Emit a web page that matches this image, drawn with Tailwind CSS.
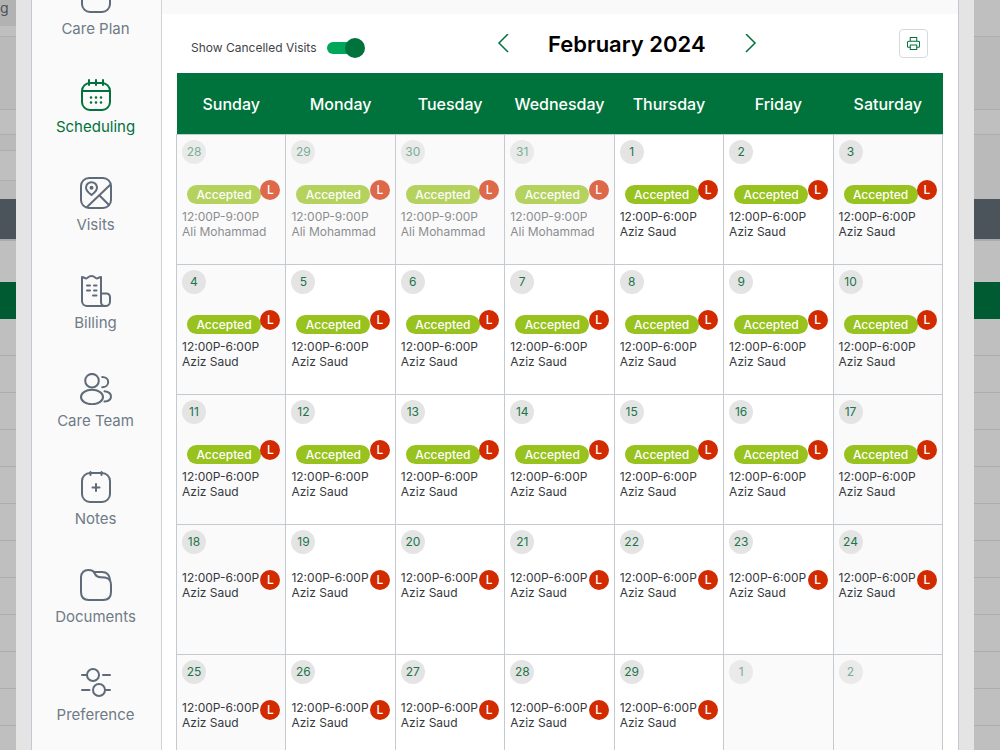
<!DOCTYPE html>
<html lang="en">
<head>
  <meta charset="UTF-8" />
  <meta name="viewport" content="width=device-width, initial-scale=1" />
  <title>Scheduling - February 2024</title>
  <script src="https://cdn.jsdelivr.net/npm/@tailwindcss/browser@4"></script>
</head>
<body class="relative flex h-screen overflow-hidden bg-[#bfbfbf] font-['Inter','Liberation_Sans',sans-serif]">

  <!-- Page behind the dialog -->
  <div class="absolute inset-0 flex flex-col overflow-hidden" aria-hidden="true">
    <div class="flex h-9 shrink-0">
      <div class="h-[26px] w-40 bg-[#b2b2b2] text-sm leading-4 text-[#4b535b]">g</div>
    </div>
    <div class="h-[74px] shrink-0 border-y border-[#adadad] bg-[#bababa]"></div>
    <div class="h-[25px] shrink-0 border-b border-[#adadad]"></div>
    <div class="flex h-16 shrink-0 justify-between bg-[#bababa]">
      <div class="flex w-1/2 flex-col">
        <div class="h-4 border-b border-[#adadad]"></div>
        <div class="h-[30px] border-b border-[#adadad] bg-[#bfbfbf]"></div>
      </div>
    </div>
    <div class="h-[42px] shrink-0 border-b-2 border-[#a9abad] bg-[#4b535b]"></div>
    <div class="h-[41px] shrink-0"></div>
    <div class="h-[37px] shrink-0 bg-[#005a32]"></div>
    <div id="backRows"></div>
  </div>

  <!-- Dialog -->
  <div class="relative mr-[26px] ml-4 flex min-w-0 flex-1 bg-[#e4e4e4] px-[15px]">
    <div class="flex min-w-0 flex-1 border-x border-[#c3c9d0] bg-white">

      <!-- Side navigation -->
      <nav class="w-[130px] shrink-0 overflow-hidden border-r border-[#cdd3da] bg-[#fafafa] pr-0.5">
        <ul class="-mt-[19px] flex flex-col gap-10 text-[15px] leading-5 text-[#6f7b87]">
          <li>
            <a href="#" class="flex flex-col items-center gap-[6px]">
              <svg class="size-8" viewBox="0 0 32 32" fill="none" stroke="#5f6b78" stroke-width="2" stroke-linecap="round"><rect x="2" y="2" width="28" height="29" rx="8" /></svg>
              Care Plan
            </a>
          </li>
          <li>
            <a href="#" aria-current="page" class="flex flex-col items-center gap-[6px] text-[#00723b]">
              <svg class="size-8" viewBox="0 0 32 32" fill="none" stroke="currentColor" stroke-width="2" stroke-linecap="round">
                <rect x="2" y="4" width="28" height="27" rx="8" />
                <path d="M2 12h28M9 1v5M16 1v5M23 1v5" />
                <path d="M11 18.500h.01M16 18.500h.01M21 18.500h.01M11 23.500h.01M16 23.500h.01M21 23.500h.01" stroke-width="2.600" />
              </svg>
              Scheduling
            </a>
          </li>
          <li>
            <a href="#" class="flex flex-col items-center gap-[6px]">
              <svg class="size-8" viewBox="0 0 32 32" fill="none" stroke="#5f6b78" stroke-width="2" stroke-linecap="round" stroke-linejoin="round">
                <rect x="1" y="1" width="30" height="30" rx="8" />
                <path d="M30 8 7 30M19.500 18.500 29 28" />
                <path d="M11.500 18c-2-1.600-5.500-4.200-5.500-7.300a5.500 5.500 0 0 1 11 0c0 3.100-3.500 5.700-5.500 7.300Z" />
                <circle cx="11.500" cy="10.700" r="1" fill="#5f6b78" />
              </svg>
              Visits
            </a>
          </li>
          <li>
            <a href="#" class="flex flex-col items-center gap-[6px]">
              <svg class="size-8" viewBox="0 0 32 32" fill="none" stroke="#5f6b78" stroke-width="2" stroke-linecap="round" stroke-linejoin="round">
                <path d="M25 31H7a5 5 0 0 1-5-5V2c2 0 2.800 1.500 4 1.500S8.500 1 11.500 1 15.800 3.500 17 3.500 19 2 21 2v25a4 4 0 0 0 4 4h.5a4.500 4.500 0 0 0 4.500-4.500V22a3.500 3.500 0 0 0-3.500-3.500H21" />
                <path d="M7 10.500h3M14 10.500h2.500M7 15.500h3M14 15.500h2.500M13 20.500h3.500" />
              </svg>
              Billing
            </a>
          </li>
          <li>
            <a href="#" class="flex flex-col items-center gap-[6px]">
              <svg class="size-8" viewBox="0 0 32 32" fill="none" stroke="#5f6b78" stroke-width="2" stroke-linecap="round">
                <circle cx="12" cy="7.700" r="6.800" />
                <ellipse cx="12" cy="24" rx="11" ry="7.200" />
                <path d="M22.200 4c3.400 0 6 2 6 5s-2.600 5.300-6 5.300M24.500 18.300c3.800.6 6.500 2.500 6.500 5.100 0 2.700-2.700 4.700-6.500 5.200" />
              </svg>
              Care Team
            </a>
          </li>
          <li>
            <a href="#" class="flex flex-col items-center gap-[6px]">
              <svg class="size-8" viewBox="0 0 32 32" fill="none" stroke="#5f6b78" stroke-width="2" stroke-linecap="round">
                <rect x="2" y="2" width="28" height="29" rx="8" />
                <path d="M10.500 1v3M21.500 1v3M16 13v7M12.500 16.500h7" />
              </svg>
              Notes
            </a>
          </li>
          <li>
            <a href="#" class="flex flex-col items-center gap-[6px]">
              <svg class="size-8" viewBox="0 0 32 32" fill="none" stroke="#5f6b78" stroke-width="2" stroke-linecap="round" stroke-linejoin="round">
                <path d="M1 8a7 7 0 0 1 7-7c4.500 0 5.500 1 7 4 1.200 2.400 2.500 3.200 5.500 3.200C26 8.200 31 9 31 16v7c0 5-3 8-8 8H9c-5 0-8-3-8-8V8Z" />
                <path d="M14 3h8c4.500 0 7.500 3 8 8" />
              </svg>
              Documents
            </a>
          </li>
          <li>
            <a href="#" class="flex flex-col items-center gap-[6px]">
              <svg class="size-8" viewBox="0 0 32 32" fill="none" stroke="#5f6b78" stroke-width="2" stroke-linecap="round">
                <circle cx="13" cy="8" r="6" />
                <circle cx="19" cy="23" r="6" />
                <path d="M2 8h5M23 8h7M2 23h7.500M25 23h5" />
              </svg>
              Preference
            </a>
          </li>
        </ul>
      </nav>

      <!-- Calendar -->
      <main class="min-w-0 flex-1 overflow-hidden">
        <div class="h-[14px] bg-[#f9f9f9]"></div>

        <div class="flex h-[59px] items-center pr-[30px] pl-[29px]">
          <label class="flex cursor-pointer items-center gap-[10px] pt-2 text-xs text-[#3f4347]">
            Show Cancelled Visits
            <span class="relative flex h-5 w-[38px] items-center">
              <input type="checkbox" role="switch" checked class="peer absolute inset-0 cursor-pointer opacity-0" />
              <span class="h-3 w-[34px] rounded-full bg-[#bdbdbd] peer-checked:bg-[#00a65a]"></span>
              <span class="absolute left-0 size-5 rounded-full bg-[#8a8a8a] peer-checked:left-auto peer-checked:right-0 peer-checked:bg-[#00723b]"></span>
            </span>
          </label>

          <div class="flex flex-1 items-center justify-center gap-[38px] pr-[10px]">
            <button type="button" aria-label="Previous month" class="text-[#00723b]">
              <svg class="h-5 w-[14px]" viewBox="0 0 14 20" fill="none" stroke="currentColor" stroke-width="1.500"><path d="m12 0-9 9 9 9" /></svg>
            </button>
            <h1 class="text-[22px] leading-7 font-semibold text-black">February 2024</h1>
            <button type="button" aria-label="Next month" class="text-[#00723b]">
              <svg class="h-5 w-[14px]" viewBox="0 0 14 20" fill="none" stroke="currentColor" stroke-width="1.500"><path d="m2 0 9 9-9 9" /></svg>
            </button>
          </div>

          <button type="button" aria-label="Print" class="flex size-[29px] items-center justify-center rounded border border-[#d3dadf] text-[#00723b]">
            <svg class="size-[13px]" viewBox="0 0 14 14" fill="none" stroke="currentColor" stroke-width="1.100" stroke-linejoin="round">
              <path d="M3.500 4.500v-4h7v4M3.500 11H1.500a1 1 0 0 1-1-1V6a1.500 1.500 0 0 1 1.500-1.500h10A1.500 1.500 0 0 1 13.500 6v4a1 1 0 0 1-1 1h-2" />
              <path d="M3.500 8.500h7v5h-7z" />
            </svg>
          </button>
        </div>

        <div class="pr-[15px] pl-[14px]">
          <table class="w-full table-fixed border-collapse">
            <thead>
              <tr class="h-[61px] bg-[#00723b] text-base text-white">
                <th scope="col" class="pt-0.5 font-medium">Sunday</th>
                <th scope="col" class="pt-0.5 font-medium">Monday</th>
                <th scope="col" class="pt-0.5 font-medium">Tuesday</th>
                <th scope="col" class="pt-0.5 font-medium">Wednesday</th>
                <th scope="col" class="pt-0.5 font-medium">Thursday</th>
                <th scope="col" class="pt-0.5 font-medium">Friday</th>
                <th scope="col" class="pt-0.5 font-medium">Saturday</th>
              </tr>
            </thead>
            <tbody id="days"></tbody>
          </table>
        </div>
      </main>
    </div>
  </div>

  <script>
    // Rows of the list behind the dialog
    document.getElementById('backRows').innerHTML =
      '<div class="h-[37px] border-b border-[#adadad]"></div>'.repeat(12);

    // Jan 28 - Mar 2, five weeks
    const start = new Date(2024, 0, 28);
    let html = '';

    for (let i = 0; i < 35; i++) {
      const date = new Date(start.getFullYear(), start.getMonth(), start.getDate() + i);
      const month = date.getMonth();
      const other = month !== 1;
      const weekend = i % 7 === 0 || i % 7 === 6;
      const accepted = i < 21;
      const shade = other || weekend ? 'bg-[#fafafa]' : 'bg-white';
      const fade = other ? 'opacity-70' : '';
      const ink = other ? 'text-[#5c5f63]' : 'text-[#36393d]';
      const number = other ? 'text-[#3f9068]' : 'text-[#1c7549]';

      if (i % 7 === 0) html += '<tr>';
      html += `<td class="h-[130px] border border-[#c5cad1] p-[5px] align-top ${shade}">
        <div class="${fade}">
          <div class="flex size-6 items-center justify-center rounded-full bg-[#e4e4e4] text-xs ${number}">${date.getDate()}</div>`;

      if (month < 2) {
        html += `
          <div class="relative mt-4 text-xs leading-[15px] whitespace-nowrap ${ink}">
            ${accepted ? '<div class="mb-[5px] pt-[5px] pl-[5px]"><span class="flex h-[19px] w-[74px] items-center justify-center rounded-full bg-[#98c21d] font-medium text-white">Accepted</span></div>' : ''}
            <span class="absolute top-0 right-0 flex size-5 items-center justify-center rounded-full bg-[#d22b00] font-medium text-white">L</span>
            <p>${month === 0 ? '12:00P-9:00P' : '12:00P-6:00P'}</p>
            <p>${month === 0 ? 'Ali Mohammad' : 'Aziz Saud'}</p>
          </div>`;
      }

      html += '</div></td>';
      if (i % 7 === 6) html += '</tr>';
    }

    document.getElementById('days').innerHTML = html;
  </script>
</body>
</html>
